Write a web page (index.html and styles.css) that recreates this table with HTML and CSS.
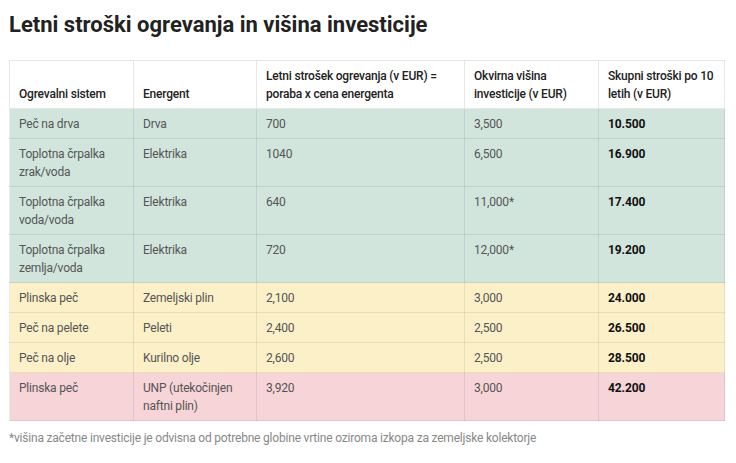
FILE: index.html
```html
<!DOCTYPE html>
<html lang="sl">
<head>
<meta charset="utf-8">
<title>Letni stroški ogrevanja in višina investicije</title>
<link rel="stylesheet" href="styles.css">
</head>
<body>
<main class="page">
  <h2 class="title">Letni stroški ogrevanja in višina investicije</h2>
  <table class="costs">
    <colgroup>
      <col class="c1"><col class="c2"><col class="c3"><col class="c4"><col class="c5">
    </colgroup>
    <thead>
      <tr>
        <th>Ogrevalni sistem</th>
        <th>Energent</th>
        <th>Letni strošek ogrevanja (v EUR) = poraba x cena energenta</th>
        <th>Okvirna višina investicije (v EUR)</th>
        <th>Skupni stroški po 10 letih (v EUR)</th>
      </tr>
    </thead>
    <tbody>
      <tr class="green"><td>Peč na drva</td><td>Drva</td><td>700</td><td>3,500</td><td class="total">10.500</td></tr>
      <tr class="green"><td>Toplotna črpalka zrak/voda</td><td>Elektrika</td><td>1040</td><td>6,500</td><td class="total">16.900</td></tr>
      <tr class="green"><td>Toplotna črpalka voda/voda</td><td>Elektrika</td><td>640</td><td>11,000*</td><td class="total">17.400</td></tr>
      <tr class="green"><td>Toplotna črpalka zemlja/voda</td><td>Elektrika</td><td>720</td><td>12,000*</td><td class="total">19.200</td></tr>
      <tr class="yellow"><td>Plinska peč</td><td>Zemeljski plin</td><td>2,100</td><td>3,000</td><td class="total">24.000</td></tr>
      <tr class="yellow"><td>Peč na pelete</td><td>Peleti</td><td>2,400</td><td>2,500</td><td class="total">26.500</td></tr>
      <tr class="yellow"><td>Peč na olje</td><td>Kurilno olje</td><td>2,600</td><td>2,500</td><td class="total">28.500</td></tr>
      <tr class="pink"><td>Plinska peč</td><td>UNP (utekočinjen naftni plin)</td><td>3,920</td><td>3,000</td><td class="total">42.200</td></tr>
    </tbody>
  </table>
  <p class="note">*višina začetne investicije je odvisna od potrebne globine vrtine oziroma izkopa za zemeljske kolektorje</p>
</main>
</body>
</html>
```
FILE: styles.css
```css
html, body {
  margin: 0;
  padding: 0;
  background: #ffffff;
}
body {
  font-family: Roboto, "Liberation Sans", sans-serif;
  color: #444;
}
.page {
  padding: 0 9px;
}
.title {
  margin: 0;
  padding-top: 12px;
  font-size: 22px;
  line-height: 26px;
  font-weight: 700;
  color: #222;
}
.costs {
  margin-top: 22px;
  width: 715px;
  table-layout: fixed;
  border-collapse: collapse;
  font-size: 12px;
  line-height: 18px;
  border: 1px solid #e2e2e2;
}
.c1 { width: 124px; }
.c2 { width: 123px; }
.c3 { width: 208px; }
.c4 { width: 134px; }
.c5 { width: 126px; }
.costs th, .costs td {
  padding: 6px 8px 5px 9px;
  text-align: left;
  border: 1px solid rgba(0, 0, 0, 0.08);
}
.costs th {
  vertical-align: bottom;
  font-weight: 500;
  color: #222;
  background: #fff;
  border-color: #e6e6e6;
  letter-spacing: -0.2px;
}
.costs td {
  vertical-align: top;
  font-weight: 400;
  color: #555;
  letter-spacing: -0.2px;
}
.costs td.total {
  font-weight: 700;
  color: #111;
  letter-spacing: -0.1px;
}
.green td { background: #d1e5dd; }
.yellow td { background: #fcf0c8; }
.pink td { background: #f6d4d8; }
.note {
  margin: 8px 0 0;
  font-size: 12px;
  line-height: 18px;
  color: #888;
  letter-spacing: -0.2px;
}
```
